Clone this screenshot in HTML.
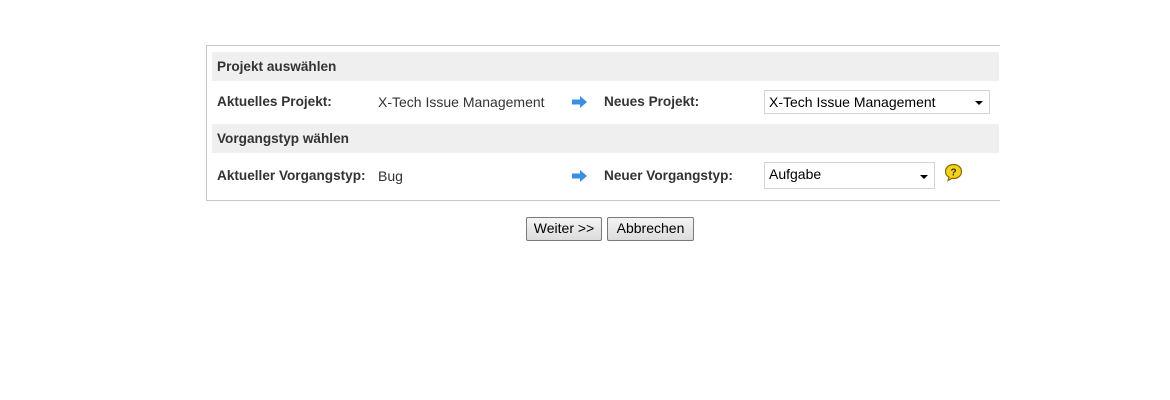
<!DOCTYPE html>
<html><head><style>
body{margin:0;width:1170px;height:400px;background:#fff;font-family:"Liberation Sans",Arial,sans-serif;font-size:14px;color:#333;position:relative;overflow:hidden}
.a{position:absolute}
.box{left:206px;top:45px;width:793px;height:154px;border:1px solid #c8c8c8;border-right:none}
.hd{left:212px;width:787px;height:29px;background:#efefef;font-weight:bold;font-size:13.6px;line-height:29px;padding-left:5px;box-sizing:border-box}
.lb{font-weight:bold;font-size:13.6px;left:217px}
.t{line-height:14px}
.sel{background:#fff;border:1px solid #d4d4d4;box-sizing:border-box;font-size:14px;color:#000;padding-left:4px}
.sel:after{content:"";position:absolute;right:6px;top:50%;border:4px solid transparent;border-top:4px solid #000;margin-top:-1px}
.btn{border:1px solid #7a7a7a;border-radius:2px;background:linear-gradient(#f4f4f4,#dcdcdc);font-size:14px;color:#000;text-align:center;line-height:21px;box-sizing:border-box;height:24px;top:217px}
</style></head><body>
<div class="a box"></div>
<div class="a hd" style="top:52px">Projekt auswählen</div>
<div class="a hd" style="top:124px">Vorgangstyp wählen</div>
<div class="a t lb" style="top:95px">Aktuelles Projekt:</div>
<div class="a t" style="left:378px;top:95px">X-Tech Issue Management</div>
<svg class="a" style="left:572px;top:96px" width="16" height="12"><path d="M0 3.5h8V0l7 6-7 6V8.5H0z" fill="#3b8fe0"/></svg>
<div class="a t lb" style="left:604px;top:95px">Neues Projekt:</div>
<div class="a sel" style="left:764px;top:90px;width:226px;height:24px;line-height:22px">X-Tech Issue Management</div>
<div class="a t lb" style="top:169px">Aktueller Vorgangstyp:</div>
<div class="a t" style="left:378px;top:169px">Bug</div>
<svg class="a" style="left:572px;top:170px" width="16" height="12"><path d="M0 3.5h8V0l7 6-7 6V8.5H0z" fill="#3b8fe0"/></svg>
<div class="a t lb" style="left:604px;top:169px">Neuer Vorgangstyp:</div>
<div class="a sel" style="left:764px;top:162px;width:171px;height:27px;line-height:22px">Aufgabe</div>
<svg class="a" style="left:944px;top:163px" width="19" height="19"><path d="M9.5 1.5C5 1.5 1.5 4.5 1.5 8.5c0 2.5 1.5 4.5 3.5 5.8L4 17.5l4-2.2c.5.1 1 .2 1.5.2 4.5 0 8-3 8-7s-3.5-7-8-7z" fill="#f2d21b" stroke="#8a6d00" stroke-width="1.2"/><text x="9.5" y="12.5" font-size="10" font-weight="bold" text-anchor="middle" fill="#333" font-family="Liberation Sans">?</text></svg>
<div class="a btn" style="left:526px;width:76px">Weiter &gt;&gt;</div>
<div class="a btn" style="left:607px;width:87px">Abbrechen</div>
</body></html>
